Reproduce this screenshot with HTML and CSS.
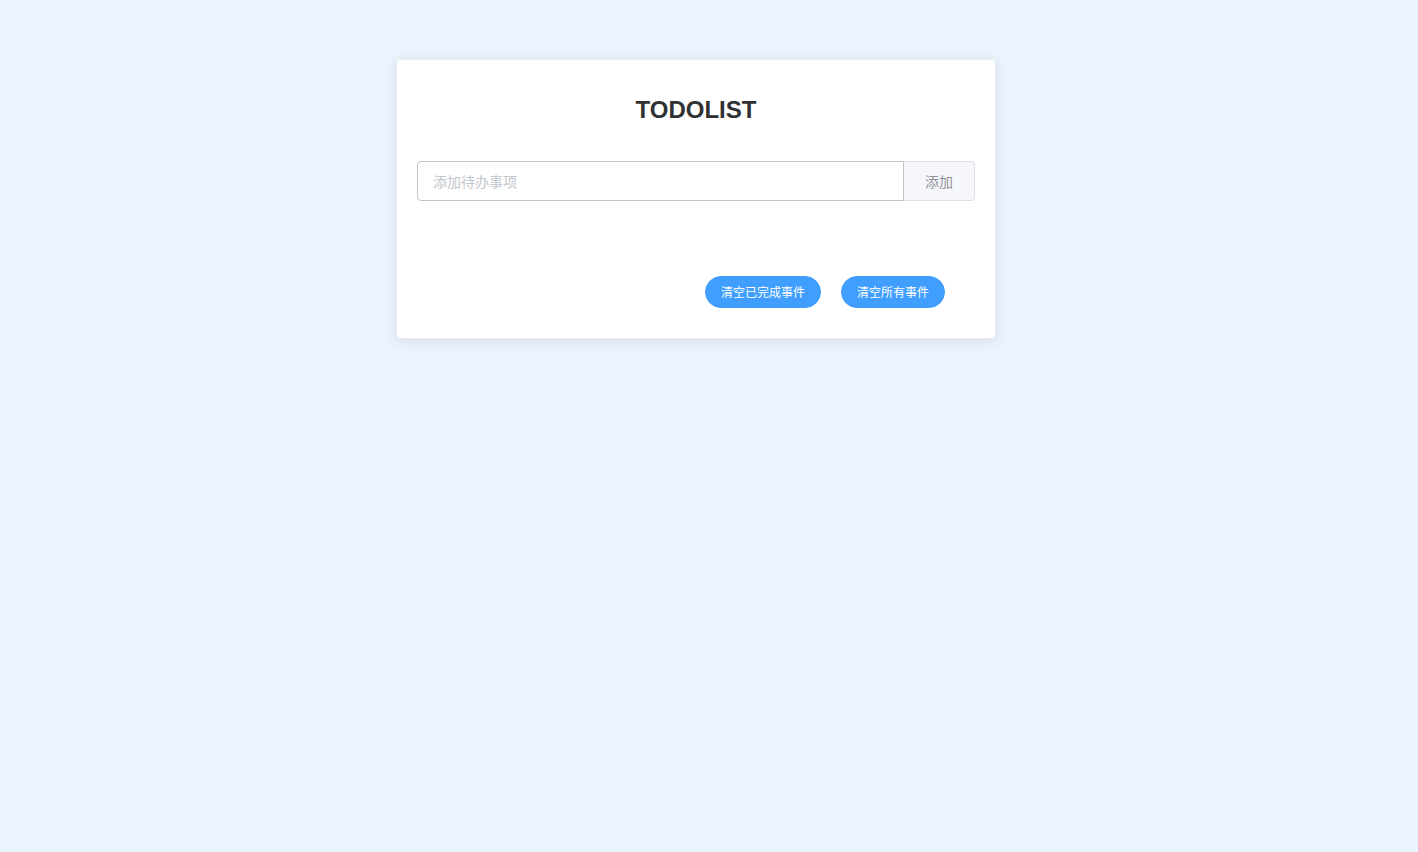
FILE: index.html
```html
<!DOCTYPE html>
<html lang="zh-CN">
<head>
<meta charset="utf-8">
<title>TODOLIST</title>
<link rel="stylesheet" href="styles.css">
</head>
<body>
<div class="page">
  <div class="card">
    <h2 class="title">TODOLIST</h2>
    <div class="input-group">
      <input class="input" type="text" placeholder="添加待办事项">
      <button class="append">添加</button>
    </div>
    <div class="list"></div>
    <div class="actions">
      <button class="btn">清空已完成事件</button>
      <button class="btn">清空所有事件</button>
    </div>
  </div>
</div>
</body>
</html>
```
FILE: styles.css
```css
html, body {
  margin: 0;
  padding: 0;
  background: #ebf3fe;
  font-family: "Liberation Sans", "Noto Sans CJK SC", sans-serif;
}
.page {
  min-height: 852px;
  box-sizing: border-box;
  padding: 59px 0 0 396px;
}
.card {
  width: 600px;
  box-sizing: border-box;
  background: #fff;
  border: 1px solid #ebeef5;
  border-radius: 4px;
  box-shadow: 0 2px 12px 0 rgba(0, 0, 0, 0.1);
  padding: 20px;
}
.title {
  margin: 16px 0 37px;
  text-align: center;
  font-family: "Liberation Sans", Arial, sans-serif;
  font-size: 24px;
  line-height: 28px;
  font-weight: bold;
  color: #303133;
}
.input-group {
  display: flex;
  height: 40px;
}
.input {
  flex: 1;
  min-width: 0;
  height: 40px;
  box-sizing: border-box;
  border: 1px solid #c0c4cc;
  border-radius: 4px 0 0 4px;
  padding: 0 15px;
  font-family: "Noto Sans CJK SC", sans-serif;
  font-size: 14px;
  color: #606266;
  outline: none;
}
.input::placeholder {
  color: #c0c4cc;
}
.append {
  width: 71px;
  height: 40px;
  box-sizing: border-box;
  background: #f5f7fa;
  border: 1px solid #dcdfe6;
  border-left: 0;
  border-radius: 0 4px 4px 0;
  color: #909399;
  font-family: "Noto Sans CJK SC", sans-serif;
  font-size: 14px;
  padding: 0;
}
.list {
  height: 75px;
}
.actions {
  display: flex;
  justify-content: flex-end;
  gap: 20px;
  padding-right: 30px;
  margin-bottom: 10px;
}
.btn {
  height: 32px;
  padding: 0 15px;
  border: 1px solid #409eff;
  background: #409eff;
  color: #fff;
  border-radius: 16px;
  font-family: "Noto Sans CJK SC", sans-serif;
  font-size: 12px;
  line-height: 30px;
}
```
